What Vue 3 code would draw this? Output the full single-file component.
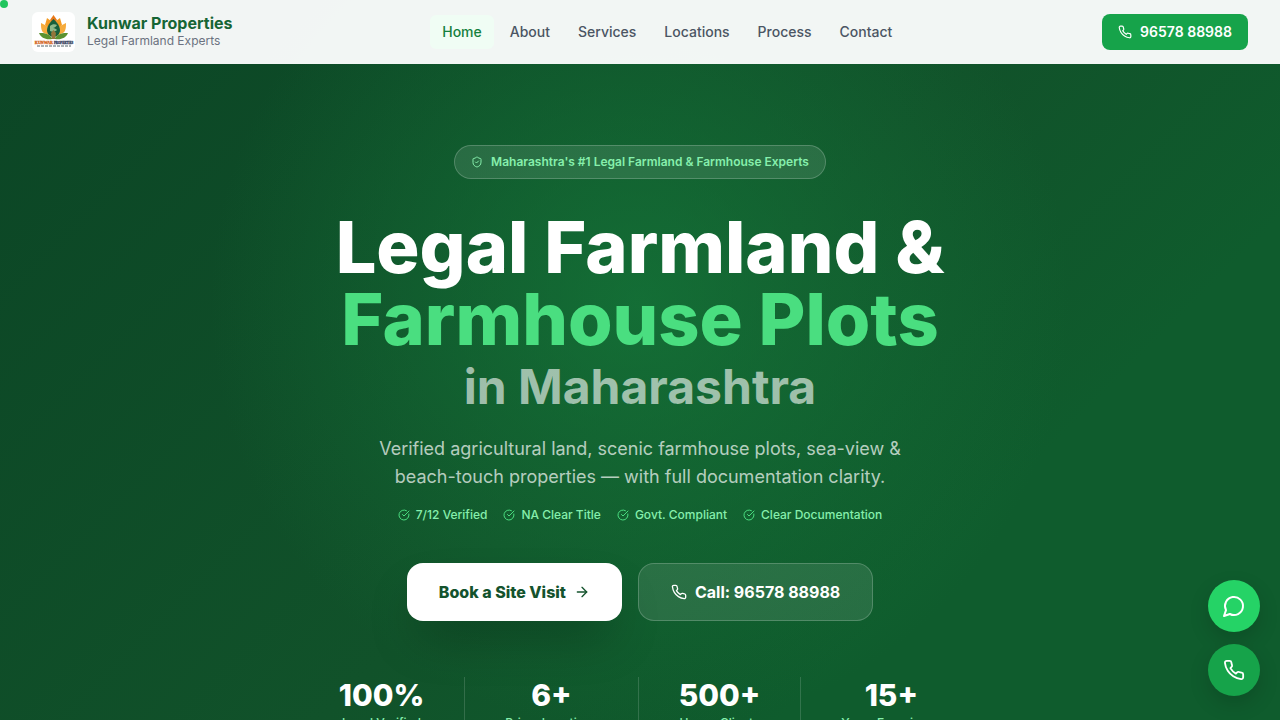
<template>
  <div class="page">
    <header class="navbar">
      <a class="brand" href="#home">
        <svg class="brand-logo" viewBox="0 0 43 40" aria-hidden="true">
          <rect width="43" height="40" rx="6" fill="#fff" />
          <path d="M21.500 3l3.500 5-3.500 6L18 8z" fill="#e8791a" />
          <path d="M15 6l4 3-1 8-5-4zM28 6l-4 3 1 8 5-4z" fill="#f39a22" />
          <path d="M9 11l6 3 4 10-7-3c-3-2-3-6-3-10zM34 11l-6 3-4 10 7-3c3-2 3-6 3-10z" fill="#f6ab3c" />
          <path d="M21.500 7c4 4 6.500 7 6.500 11 0 4-3 7-6.500 7S15 22 15 18c0-4 2.500-7 6.500-11z" fill="#17603c" />
          <path d="M18 14c2-2 5-2 7-1-1 2-3 3-4 3 2 0 3 1 4 2-2 2-5 2-7 1z" fill="#8fb98a" />
          <path d="M20 26c-4-5-8-5-13-5 2 5 7 7 13 6zM23 26c4-5 8-5 13-5-2 5-7 7-13 6z" fill="#5b9230" />
          <path d="M21.500 18l2.500 3-1 6h-3l-1-6z" fill="#94763a" />
          <g font-family="Liberation Serif, serif" font-size="4" font-weight="700">
            <text x="21" y="32" text-anchor="end" fill="#d4651c" stroke="#d4651c" stroke-width=".3">KUNWAR</text>
            <text x="22" y="32" fill="#34405f" stroke="#34405f" stroke-width=".3" font-size="3">PROPERTIES</text>
          </g>
          <path d="M5 34h34" stroke="#54656b" stroke-width="1" stroke-dasharray="3 1" />
        </svg>
        <span class="brand-text">
          <span class="brand-name">Kunwar Properties</span>
          <span class="brand-sub">Legal Farmland Experts</span>
        </span>
      </a>

      <nav class="nav-links">
        <a
          v-for="link in links"
          :key="link"
          class="nav-link"
          :class="{ on: link === active }"
          :href="'#' + link.toLowerCase()"
          @click="active = link"
        >{{ link }}</a>
      </nav>

      <a class="nav-call" href="tel:+919657888988">
        <svg class="icon" width="14" height="14" viewBox="0 0 24 24"><path :d="phone" /></svg>
        96578 88988
      </a>
    </header>

    <span class="cursor-dot"></span>

    <main class="hero">
      <div class="badge">
        <svg class="icon" width="12" height="12" viewBox="0 0 24 24">
          <path d="M20 13c0 5-3.500 7.500-7.660 8.950a1 1 0 0 1-.67-.01C7.500 20.500 4 18 4 13V6a1 1 0 0 1 1-1c2 0 4.500-1.200 6.240-2.720a1.170 1.170 0 0 1 1.520 0C14.510 3.810 17 5 19 5a1 1 0 0 1 1 1z" />
          <path d="m9 12 2 2 4-4" />
        </svg>
        Maharashtra's #1 Legal Farmland &amp; Farmhouse Experts
      </div>

      <h1 class="title">
        <span>Legal Farmland &amp;</span>
        <span class="title-accent">Farmhouse Plots</span>
        <span class="title-small">in Maharashtra</span>
      </h1>

      <p class="lead">
        Verified agricultural land, scenic farmhouse plots, sea-view &amp;
        beach-touch properties — with full documentation clarity.
      </p>

      <ul class="checks">
        <li v-for="item in checks" :key="item">
          <svg class="icon" width="12" height="12" viewBox="0 0 24 24">
            <path d="M21.801 10A10 10 0 1 1 17 3.335" />
            <path d="m9 11 3 3L22 4" />
          </svg>
          {{ item }}
        </li>
      </ul>

      <div class="actions">
        <a class="btn btn-light" href="#contact">
          Book a Site Visit
          <svg class="icon" width="16" height="16" viewBox="0 0 24 24"><path d="M5 12h14" /><path d="m12 5 7 7-7 7" /></svg>
        </a>
        <a class="btn btn-glass" href="tel:+919657888988">
          <svg class="icon" width="16" height="16" viewBox="0 0 24 24"><path :d="phone" /></svg>
          Call: 96578 88988
        </a>
      </div>

      <div class="stats">
        <div v-for="s in stats" :key="s.label" class="stat">
          <div class="stat-value">{{ s.value }}</div>
          <div class="stat-label">{{ s.label }}</div>
        </div>
      </div>
    </main>

    <div class="floating">
      <a class="fab fab-chat" href="#chat" aria-label="WhatsApp">
        <svg class="icon" width="24" height="24" viewBox="0 0 24 24"><path d="M7.900 20A9 9 0 1 0 4 16.100L2 22Z" /></svg>
      </a>
      <a class="fab" href="tel:+919657888988" aria-label="Call">
        <svg class="icon" width="22" height="22" viewBox="0 0 24 24"><path :d="phone" /></svg>
      </a>
    </div>
  </div>
</template>

<script setup>
import { ref } from 'vue'

const active = ref('Home')
const links = ['Home', 'About', 'Services', 'Locations', 'Process', 'Contact']
const checks = ['7/12 Verified', 'NA Clear Title', 'Govt. Compliant', 'Clear Documentation']
const stats = [
  { value: '100%', label: 'Legal Verified' },
  { value: '6+', label: 'Prime Locations' },
  { value: '500+', label: 'Happy Clients' },
  { value: '15+', label: 'Years Experience' }
]

const phone =
  'M22 16.920v3a2 2 0 0 1-2.180 2 19.790 19.790 0 0 1-8.630-3.070 19.500 19.500 0 0 1-6-6 19.790 19.790 0 0 1-3.070-8.670A2 2 0 0 1 4.110 2h3a2 2 0 0 1 2 1.720 12.840 12.840 0 0 0 .7 2.810 2 2 0 0 1-.45 2.110L8.090 9.910a16 16 0 0 0 6 6l1.270-1.270a2 2 0 0 1 2.110-.45 12.840 12.840 0 0 0 2.810.7A2 2 0 0 1 22 16.920z'
</script>

<style>
body {
  margin: 0;
  overflow: hidden;
}
</style>

<style scoped>
.page {
  height: 100vh;
  overflow: hidden;
  font-family: Inter, "Liberation Sans", sans-serif;
  color: #fff;
  background:
    radial-gradient(circle at 50% 42%, rgba(22,128,61,.62) 0, rgba(22,128,61,0) 430px),
    linear-gradient(135deg, #0b4525 0%, #11522a 52%, #0f5c2d 75%, #0f5c2d 100%);
}
a { text-decoration: none; color: inherit; }

.icon {
  flex: none;
  fill: none;
  stroke: currentColor;
  stroke-width: 2;
  stroke-linecap: round;
  stroke-linejoin: round;
}

/* top bar */
.navbar {
  height: 64px;
  box-sizing: border-box;
  padding: 0 32px;
  display: flex;
  align-items: center;
  justify-content: space-between;
  background: rgba(255,255,255,.95);
}
.brand { display: flex; align-items: center; gap: 12px; }
.brand-logo { width: 43px; height: 40px; }
.brand-text { display: flex; flex-direction: column; padding-bottom: 2px; }
.brand-name { font-size: 16px; line-height: 20px; font-weight: 700; color: #166534; }
.brand-sub { font-size: 12px; line-height: 16px; color: #6b7280; }

.nav-links { display: flex; gap: 4px; }
.nav-link {
  padding: 6px 12px;
  border-radius: 6px;
  font-size: 14px;
  line-height: 22px;
  font-weight: 500;
  color: #4b5563;
}
.nav-link.on { background: #f0fdf4; color: #15803d; }

.nav-call {
  display: flex;
  align-items: center;
  gap: 8px;
  padding: 8px 16px;
  border-radius: 8px;
  background: #16a34a;
  font-size: 14px;
  line-height: 20px;
  font-weight: 600;
}

.cursor-dot {
  position: absolute;
  top: 0;
  left: 0;
  width: 8px;
  height: 8px;
  border-radius: 50%;
  background: #22c55e;
}

/* hero */
.hero {
  padding-top: 81px;
  display: flex;
  flex-direction: column;
  align-items: center;
}
.badge {
  display: flex;
  align-items: center;
  gap: 8px;
  padding: 8px 16px;
  border: 1px solid rgba(255,255,255,.2);
  border-radius: 999px;
  background: rgba(255,255,255,.1);
  font-size: 12px;
  line-height: 16px;
  font-weight: 600;
  color: #86efac;
}

.title {
  margin: 32px 0 0;
  font-size: 72px;
  line-height: 72px;
  font-weight: 800;
  text-align: center;
}
.title span { display: block; }
.title .title-accent { color: #4ade80; }
.title .title-small {
  margin-top: 8px;
  font-size: 48px;
  line-height: 48px;
  font-weight: 700;
  color: rgba(255,255,255,.6);
}

.lead {
  margin: 24px 0 0;
  max-width: 576px;
  font-size: 18px;
  line-height: 28px;
  text-align: center;
  color: rgba(255,255,255,.7);
}

.checks {
  display: flex;
  gap: 16px;
  margin: 16px 0 0;
  padding: 0;
  list-style: none;
  font-size: 12px;
  line-height: 16px;
  font-weight: 500;
  color: #86efac;
}
.checks li { display: flex; align-items: center; gap: 6px; }
.checks .icon { color: #4ade80; }

.actions { display: flex; gap: 16px; margin-top: 40px; }
.btn {
  display: flex;
  align-items: center;
  gap: 8px;
  padding: 16px 32px;
  border-radius: 16px;
  font-size: 16px;
  line-height: 26px;
  font-weight: 700;
}
.btn-light {
  background: #fff;
  color: #14532d;
  font-weight: 800;
  box-shadow: 0 25px 50px -12px rgba(0,0,0,.3);
}
.btn-glass {
  padding: 15px 32px;
  border: 1px solid rgba(255,255,255,.2);
  background: rgba(255,255,255,.1);
}

.stats { display: flex; margin-top: 56px; }
.stat { padding: 0 40px; text-align: center; }
.stat + .stat { border-left: 1px solid rgba(255,255,255,.15); }
.stat-value { font-size: 30px; line-height: 36px; font-weight: 800; }
.stat-label { margin-top: 2px; font-size: 12px; line-height: 16px; font-weight: 500; color: #86efac; }

/* floating contact buttons */
.floating {
  position: fixed;
  right: 20px;
  bottom: 24px;
  display: flex;
  flex-direction: column;
  gap: 12px;
}
.fab {
  width: 52px;
  height: 52px;
  display: flex;
  align-items: center;
  justify-content: center;
  border-radius: 50%;
  background: #16a34a;
  box-shadow: 0 8px 20px rgba(0,0,0,.15);
}
.fab-chat { background: #25d366; }

@media (max-width: 768px) {
  .nav-links { display: none; }
  .title { font-size: 44px; line-height: 48px; }
  .title .title-small { font-size: 30px; line-height: 36px; }
  .actions, .checks { flex-wrap: wrap; justify-content: center; }
}
</style>
